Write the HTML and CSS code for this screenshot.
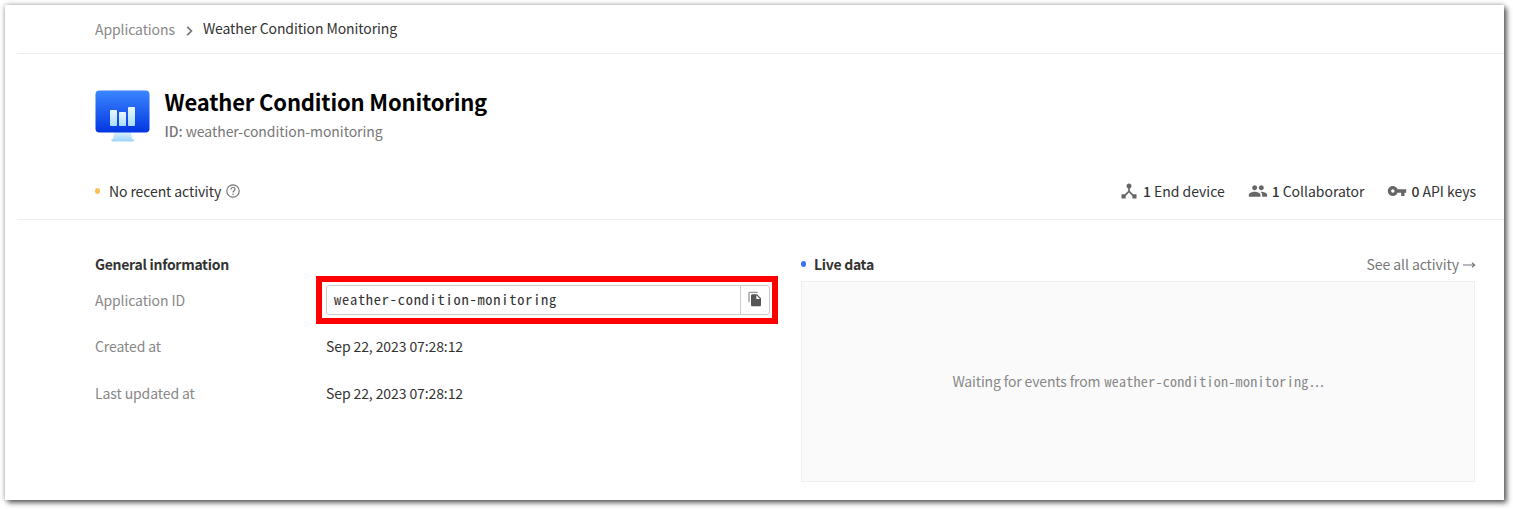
FILE: index.html
```html
<!DOCTYPE html>
<html lang="en">
<head>
<meta charset="utf-8">
<title>Weather Condition Monitoring</title>
<link rel="stylesheet" href="styles.css">
</head>
<body>
<main class="card">
  <nav class="breadcrumbs">
    <a class="crumb">Applications</a>
    <svg class="chevron" width="7" height="10" viewBox="0 0 7 10"><path d="M1.2 .8 5.4 5 1.2 9.2" fill="none" stroke="#777" stroke-width="1.7"/></svg>
    <span class="crumb-current">Weather Condition Monitoring</span>
  </nav>
  <header class="header">
    <div class="title-row">
      <svg class="logo" width="56" height="54" viewBox="0 0 56 54">
        <defs>
          <linearGradient id="screen" x1="0" y1="0" x2="0" y2="1"><stop offset="0" stop-color="#3b86ff"/><stop offset="1" stop-color="#0236e2"/></linearGradient>
          <linearGradient id="bar" x1="0" y1="0" x2="0" y2="1"><stop offset="0" stop-color="#eaf7ff"/><stop offset="1" stop-color="#a9dcff"/></linearGradient>
          <linearGradient id="stand" x1="0" y1="0" x2="0" y2="1"><stop offset="0" stop-color="#dcf2ff"/><stop offset="1" stop-color="#9ad4fb"/></linearGradient>
        </defs>
        <path d="M19 42h17l1 7h1q1 0 1 1.300t-1 1.300H17.500q-1.200 0-1.200-1.300t1.200-1.300h.6z" fill="url(#stand)"/>
        <rect x=".5" y=".5" width="54" height="42" rx="4" fill="url(#screen)"/>
        <g fill="url(#bar)"><rect x="15" y="20" width="7" height="16" rx=".8"/><rect x="24" y="22" width="7" height="14" rx=".8"/><rect x="33" y="17" width="7" height="19" rx=".8"/></g>
      </svg>
      <div class="title-text">
        <h1 class="title">Weather Condition Monitoring</h1>
        <div class="subtitle"><span class="id-label">ID:</span> weather-condition-monitoring</div>
      </div>
    </div>
    <div class="status-row">
      <div class="status"><i class="dot dot-idle"></i><span class="activity">No recent activity</span>
        <svg class="help" width="14" height="14" viewBox="0 0 14 14"><circle cx="7" cy="7" r="6.200" fill="none" stroke="#777" stroke-width="1.200"/><path d="M5 5.500C5 4.200 5.800 3.500 7 3.500s2 .7 2 1.800C9 6.800 7 6.800 7 8.500" fill="none" stroke="#777" stroke-width="1.200"/><circle cx="7" cy="10.300" r=".8" fill="#777"/></svg>
      </div>
      <div class="stats">
        <div class="stat stat-device"><svg width="20" height="20" viewBox="0 0 24 24"><path d="M17 16l-4-4V8.820C14.160 8.400 15 7.300 15 6c0-1.660-1.340-3-3-3S9 4.340 9 6c0 1.300.84 2.400 2 2.820V12l-4 4H3v5h5v-3.050l4-4.200 4 4.200V21h5v-5h-4z"/></svg><span><b>1</b> End device</span></div>
        <div class="stat stat-collaborator"><svg width="20" height="20" viewBox="0 0 24 24"><path d="M16 11c1.660 0 2.990-1.340 2.990-3S17.660 5 16 5s-3 1.340-3 3 1.340 3 3 3zm-8 0c1.660 0 2.990-1.340 2.990-3S9.660 5 8 5 5 6.340 5 8s1.340 3 3 3zm0 2c-2.330 0-7 1.170-7 3.500V19h14v-2.500c0-2.330-4.670-3.500-7-3.500zm8 0c-.29 0-.62.020-.97.050 1.160.84 1.970 1.970 1.970 3.450V19h6v-2.500c0-2.330-4.670-3.500-7-3.500z"/></svg><span><b>1</b> Collaborator</span></div>
        <div class="stat stat-keys"><svg width="20" height="20" viewBox="0 0 24 24"><path d="M12.650 10C11.830 7.670 9.610 6 7 6c-3.310 0-6 2.690-6 6s2.690 6 6 6c2.610 0 4.830-1.670 5.650-4H17v4h4v-4h2v-4H12.650zM7 14c-1.100 0-2-.9-2-2s.9-2 2-2 2 .9 2 2-.9 2-2 2z"/></svg><span><b>0</b> API keys</span></div>
      </div>
    </div>
  </header>
  <div class="content">
    <section class="info">
      <h2 class="section-title general">General information</h2>
      <dl class="fields">
        <dt class="label-app">Application ID</dt>
        <dd class="highlight"><div class="copy-field"><code class="copy-value">weather-condition-monitoring</code><button class="copy-button" aria-label="Copy"><svg width="16" height="16" viewBox="0 0 24 24"><path fill="#999" d="M16 1H4c-1.100 0-2 .9-2 2v14h2V3h12V1z"/><path fill="#555" d="M15 5l6 6v10c0 1.100-.9 2-2 2H7.990C6.890 23 6 22.100 6 21l.010-14c0-1.100.89-2 1.990-2h7zm-1 7h5.500L14 6.500V12z"/></svg></button></div></dd>
        <dt class="label-created">Created at</dt><dd class="date date-created">Sep 22, 2023 07:28:12</dd>
        <dt class="label-updated">Last updated at</dt><dd class="date">Sep 22, 2023 07:28:12</dd>
      </dl>
    </section>
    <section class="live">
      <div class="live-header"><h2 class="section-title live-title"><i class="dot dot-live"></i><span class="live-label">Live data</span></h2><a class="see-all"><span class="see-text">See all activity</span><svg class="arrow" width="13" height="8" viewBox="0 0 13 8"><path d="M0 4h11.500M9 1.800 11.700 4 9 6.200" fill="none" stroke="#777" stroke-width="1.100"/></svg></a></div>
      <div class="events"><span class="waiting">Waiting for events from</span><code class="events-id">weather-condition-monitoring<span class="ellipsis">...</span></code></div>
    </section>
  </div>
</main>
</body>
</html>
```
FILE: styles.css
```css
* { box-sizing: border-box; }
body { margin: 0; padding: 5px 9px 9px 5px; height: 509px; overflow: hidden; background: #fff; color: #333; font: 14px/20px "Noto Sans CJK SC", "Noto Sans", sans-serif; letter-spacing: -.1px; white-space: nowrap; }
h1, h2, dl, dd { margin: 0; }
.card { height: 495px; padding-left: 12px; background: #fff; box-shadow: 3px 3px 5px rgba(0, 0, 0, .55), 0 0 5px rgba(0, 0, 0, .35); }
.breadcrumbs { display: flex; align-items: center; height: 49px; padding: 0 0 2px 78px; border-bottom: 1px solid #eee; }
.crumb { color: #888; padding-top: 1px; }
.chevron { margin: 5px 10px 0 11px; }
.crumb-current { padding-bottom: 1px; }
.header { height: 166px; padding: 36px 28px 0 78px; border-bottom: 1px solid #eee; }
.title-row { display: flex; height: 91px; }
.title-text { margin: -2px 0 0 13.500px; }
.title { color: #000; font-size: 22px; line-height: 26px; letter-spacing: -.17px; }
.subtitle { margin-top: 7px; color: #777; letter-spacing: -.05px; }
.id-label { font-weight: 500; }
.status-row { display: flex; justify-content: space-between; height: 20px; }
.status, .stats, .stat { display: flex; align-items: center; }
.dot { flex: none; width: 5px; height: 6px; border-radius: 50%; }
.dot-idle { margin-right: 9px; background: #ffbf5c; }
.help { margin-left: 4.500px; }
.stats { gap: 23px; letter-spacing: -.03px; }
.stat svg { margin-right: 4px; fill: #666; }
.stat b { font-weight: 500; }
.content { display: flex; padding: 34px 29px 0 78px; }
.info { width: 706px; }
.section-title { font-size: 14px; line-height: 20px; font-weight: 700; letter-spacing: -.29px; }
.fields { display: grid; grid-template-columns: 221px 462px; grid-template-rows: 48px 46px 47px; align-items: center; margin-top: 2px; color: #888; }
.highlight { height: 48px; border: 6px solid #f00; padding: 3px 3px 3px 4px; }
.label-updated, .date { padding-bottom: 1px; }
.label-created, .date-created { padding-bottom: 2px; }
.copy-field { display: flex; height: 30px; width: 444px; border: 1px solid #ccc; border-radius: 3px; }
.copy-value { flex: 1; padding-left: 7px; color: #333; font: 14.400px/26px "Noto Sans Mono CJK SC", "Liberation Mono", monospace; letter-spacing: .77px; }
.copy-button { display: flex; align-items: center; justify-content: center; width: 29px; padding: 0 0 2px; border: 0; border-left: 1px solid #ccc; background: none; }
.date { padding-left: 10px; color: #333; }
.live { flex: 1; }
.live-header { display: flex; justify-content: space-between; height: 27px; }
.live-title { display: flex; align-items: center; height: 20px; }
.dot-live { margin-right: 8px; background: #366eff; }
.see-all { display: flex; align-items: center; height: 20px; margin-right: -1px; color: #777; }
.see-text { letter-spacing: -.08px; }
.arrow { margin: 1px 0 0 4px; }
.events { display: flex; align-items: center; justify-content: center; height: 201px; padding-bottom: 1px; border: 1px solid #eee; background: #fafafa; color: #888; }
.waiting { letter-spacing: -.15px; }
.events-id { margin-left: 4px; font: 14px/20px "Noto Sans Mono CJK SC", "Liberation Mono", monospace; letter-spacing: .29px; }
.ellipsis { letter-spacing: -2px; }
```
